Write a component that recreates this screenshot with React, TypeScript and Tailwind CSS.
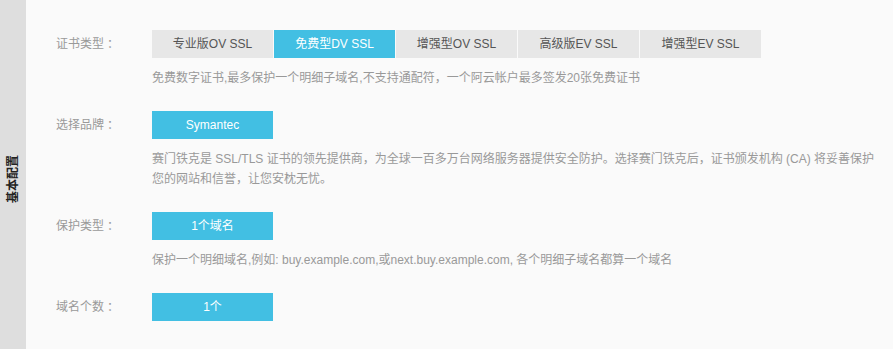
import React from "react";

const font = { fontFamily: '"Liberation Sans", "Noto Sans CJK SC", Arial, sans-serif' };

const tabs = ["专业版OV SSL", "免费型DV SSL", "增强型OV SSL", "高级版EV SSL", "增强型EV SSL"];

function Label({ text }: { text: string }) {
  return (
    <div className="w-[96px] h-[28px] flex items-center text-[12px] text-[#999]">
      {text}
      <span className="font-['Noto_Sans_CJK_TC',sans-serif]">：</span>
    </div>
  );
}

function Row({ label, children, desc }: { label: string; children: React.ReactNode; desc: React.ReactNode }) {
  return (
    <div className="flex mb-[23px]">
      <Label text={label} />
      <div className="flex flex-col">
        {children}
        <div className="mt-[10px] text-[12px] leading-[20px] text-[#999]">{desc}</div>
      </div>
    </div>
  );
}

function BlueBtn({ text }: { text: string }) {
  return (
    <div className="w-[121px] h-[28px] bg-[#42bfe3] text-white text-[12px] flex items-center justify-center">{text}</div>
  );
}

export default function App() {
  return (
    <div className="w-[893px] h-[349px] flex bg-[#fafafa] overflow-hidden" style={font}>
      <div className="w-[26px] bg-[#dedede] flex items-center justify-center">
        <div className="-rotate-90 whitespace-nowrap text-[12px] font-bold text-[#222] mt-[9px]">基本配置</div>
      </div>
      <div className="flex-1 pl-[30px] pt-[30px]">
        <Row
          label="证书类型"
          desc="免费数字证书,最多保护一个明细子域名,不支持通配符，一个阿云帐户最多签发20张免费证书"
        >
          <div className="flex gap-[1px]">
            {tabs.map((t, i) => (
              <div
                key={t}
                className={
                  i === 1
                    ? "w-[121px] h-[28px] flex items-center justify-center text-[12px] bg-[#42bfe3] text-white"
                    : "w-[121px] h-[28px] flex items-center justify-center text-[12px] bg-[#e7e7e7] text-[#555]"
                }
              >
                {t}
              </div>
            ))}
          </div>
        </Row>
        <Row
          label="选择品牌"
          desc={
            <>
              赛门铁克是 SSL/TLS 证书的领先提供商，为全球一百多万台网络服务器提供安全防护。选择赛门铁克后，证书颁发机构 (CA) 将妥善保护
              <br />
              您的网站和信誉，让您安枕无忧。
            </>
          }
        >
          <BlueBtn text="Symantec" />
        </Row>
        <Row
          label="保护类型"
          desc="保护一个明细域名,例如: buy.example.com,或next.buy.example.com, 各个明细子域名都算一个域名"
        >
          <BlueBtn text="1个域名" />
        </Row>
        <div className="flex">
          <Label text="域名个数" />
          <BlueBtn text="1个" />
        </div>
      </div>
    </div>
  );
}
